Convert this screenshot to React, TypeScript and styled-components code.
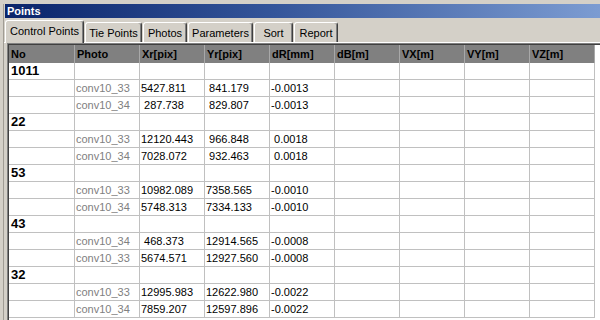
import React from "react";
import styled, { createGlobalStyle } from "styled-components";

const GlobalStyle = createGlobalStyle`
  html, body { margin: 0; padding: 0; background: #d4d0c8; }
  body { font-family: "Liberation Sans", Arial, sans-serif; font-size: 11px; }
  * { box-sizing: border-box; }
`;

const Window = styled.div`
  width: 600px;
  height: 320px;
  overflow: hidden;
  background: #d4d0c8;
  padding: 4px 0 0 3px;
  display: flex;
`;

const Frame = styled.div`
  flex: 1;
  min-width: 0;
  display: flex;
  flex-direction: column;
  border-left: 1px solid #a09c94;
`;

const TitleBar = styled.div`
  height: 14px;
  margin-left: 1px;
  padding-left: 2px;
  font-weight: bold;
  font-size: 11px;
  line-height: 14px;
  color: #ffffff;
  background: linear-gradient(90deg, #0a246a 0%, #34559a 45%, #7c9cd2 100%);
`;

const TabStrip = styled.div`
  margin-top: 2px;
  height: 23px;
  display: flex;
  align-items: flex-end;
  gap: 1px;
  padding-left: 1px;
  border-bottom: 1px solid #ffffff;
`;

const Tab = styled.div<{ $w: number; $active?: boolean }>`
  width: ${(p) => p.$w}px;
  height: ${(p) => (p.$active ? 23 : 20)}px;
  margin-bottom: ${(p) => (p.$active ? -1 : 0)}px;
  position: relative;
  z-index: ${(p) => (p.$active ? 1 : 0)};
  background: #d4d0c8;
  border-top: 1px solid #ffffff;
  border-left: 1px solid #ffffff;
  border-right: 1px solid #404040;
  box-shadow: inset -1px 0 0 #808080;
  border-radius: 3px 3px 0 0;
  display: flex;
  align-items: center;
  justify-content: center;
  padding-bottom: ${(p) => (p.$active ? 2 : 0)}px;
  font-size: 11px;
  color: #000000;
  white-space: nowrap;
`;

const GridBox = styled.div`
  flex: 1;
  min-height: 0;
  margin-left: 3px;
  border-top: 1px solid #808080;
  border-left: 1px solid #808080;
  background: #ffffff;
  overflow: hidden;
`;

const GridInner = styled.div`
  height: 100%;
  border-top: 1px solid #404040;
  border-left: 1px solid #404040;
`;

const Table = styled.div`
  display: grid;
  grid-template-columns: 66px repeat(8, 65px);
  grid-template-rows: 18px;
  grid-auto-rows: 17px;
  width: max-content;
`;

const HeadCell = styled.div`
  background: #808080;
  border-right: 1px solid #a8a8a8;
  padding-left: 2px;
  font-weight: bold;
  font-size: 11px;
  line-height: 18px;
  color: #000000;
  white-space: nowrap;
  overflow: hidden;
`;

const Cell = styled.div<{ $tone?: "muted" | "group" | "plain" }>`
  border-right: 1px solid #c0c0c0;
  border-bottom: 1px solid #c0c0c0;
  padding-left: ${(p) => (p.$tone === "group" ? 2 : 1)}px;
  font-size: ${(p) => (p.$tone === "group" ? 13 : 11)}px;
  font-weight: ${(p) => (p.$tone === "group" ? "bold" : "normal")};
  line-height: 16px;
  color: ${(p) => (p.$tone === "muted" ? "#808080" : "#000000")};
  white-space: pre;
  overflow: hidden;
`;

const tabs = [
  { label: "Control Points", w: 79, active: true },
  { label: "Tie Points", w: 57 },
  { label: "Photos", w: 44 },
  { label: "Parameters", w: 65 },
  { label: "Sort", w: 39 },
  { label: "Report", w: 44 },
];

const headers = ["No", "Photo", "Xr[pix]", "Yr[pix]", "dR[mm]", "dB[m]", "VX[m]", "VY[m]", "VZ[m]"];

type Obs = [string, string, string, string];
const groups: { id: string; rows: Obs[] }[] = [
  {
    id: "1011",
    rows: [
      ["conv10_33", "5427.811", " 841.179", "-0.0013"],
      ["conv10_34", " 287.738", " 829.807", "-0.0013"],
    ],
  },
  {
    id: "22",
    rows: [
      ["conv10_33", "12120.443", " 966.848", " 0.0018"],
      ["conv10_34", "7028.072", " 932.463", " 0.0018"],
    ],
  },
  {
    id: "53",
    rows: [
      ["conv10_33", "10982.089", "7358.565", "-0.0010"],
      ["conv10_34", "5748.313", "7334.133", "-0.0010"],
    ],
  },
  {
    id: "43",
    rows: [
      ["conv10_34", " 468.373", "12914.565", "-0.0008"],
      ["conv10_33", "5674.571", "12927.560", "-0.0008"],
    ],
  },
  {
    id: "32",
    rows: [
      ["conv10_33", "12995.983", "12622.980", "-0.0022"],
      ["conv10_34", "7859.207", "12597.896", "-0.0022"],
    ],
  },
];

const emptyTail = (n: number, key: string) =>
  Array.from({ length: n }, (_, i) => <Cell key={`${key}-e${i}`} />);

export default function App() {
  return (
    <>
      <GlobalStyle />
      <Window>
        <Frame>
          <TitleBar>Points</TitleBar>
          <TabStrip>
            {tabs.map((t) => (
              <Tab key={t.label} $w={t.w} $active={t.active}>
                {t.label}
              </Tab>
            ))}
          </TabStrip>
          <GridBox>
            <GridInner>
              <Table>
                {headers.map((h) => (
                  <HeadCell key={h}>{h}</HeadCell>
                ))}
                {groups.map((g) => (
                  <React.Fragment key={g.id}>
                    <Cell $tone="group">{g.id}</Cell>
                    {emptyTail(8, g.id)}
                    {g.rows.map((r, i) => (
                      <React.Fragment key={`${g.id}-${i}`}>
                        <Cell />
                        <Cell $tone="muted">{r[0]}</Cell>
                        <Cell>{r[1]}</Cell>
                        <Cell>{r[2]}</Cell>
                        <Cell>{r[3]}</Cell>
                        {emptyTail(4, `${g.id}-${i}`)}
                      </React.Fragment>
                    ))}
                  </React.Fragment>
                ))}
              </Table>
            </GridInner>
          </GridBox>
        </Frame>
      </Window>
    </>
  );
}
